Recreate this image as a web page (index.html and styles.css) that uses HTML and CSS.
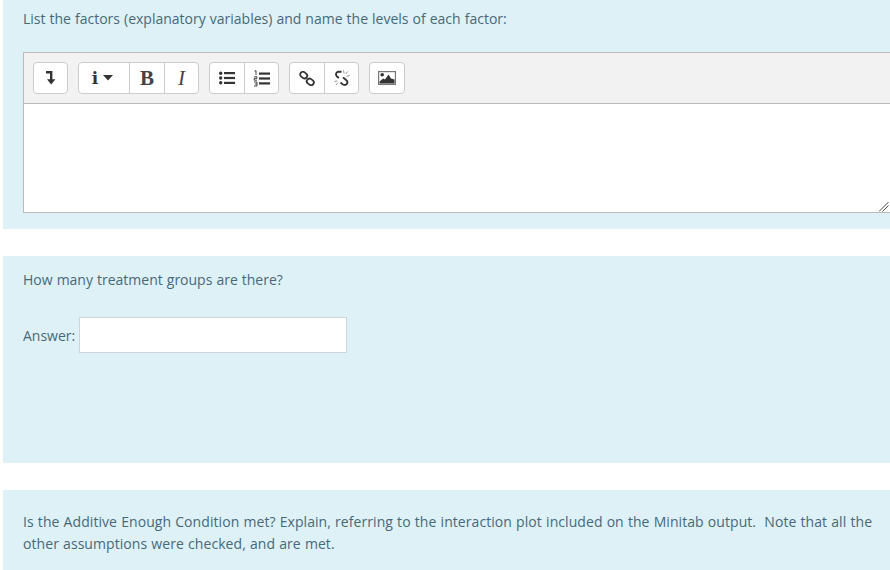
FILE: index.html
```html
<!DOCTYPE html>
<html lang="en">
<head>
    <meta charset="UTF-8">
    <title>Quiz questions</title>
    <link rel="stylesheet" href="styles.css">
</head>
<body>
  <div class="question first">
    <p class="qtext">List the factors (explanatory variables) and name the levels of each factor:</p>
    <div class="editor">
      <div class="toolbar">
        <div class="group">
          <button class="tool single">
            <svg width="10" height="14" viewBox="0 0 10 14"><path d="M0 1.2H5.2V9" fill="none" stroke="#333" stroke-width="2.4"/><path d="M1 8.2h8.4L5.2 13.6z" fill="#333"/></svg>
          </button>
        </div>
        <div class="group">
          <button class="tool wide">
            <span class="glyph-i">i</span>
            <svg width="10" height="6" viewBox="0 0 10 6"><path d="M0 0h10L5 5.5z" fill="#333"/></svg>
          </button>
          <button class="tool narrow"><span class="glyph-b">B</span></button>
          <button class="tool"><span class="glyph-em">I</span></button>
        </div>
        <div class="group">
          <button class="tool">
            <svg width="16" height="14" viewBox="0 0 16 14"><g fill="#333"><circle cx="1.7" cy="2.2" r="1.7"/><circle cx="1.7" cy="7" r="1.7"/><circle cx="1.7" cy="11.8" r="1.7"/><rect x="5" y="1" width="11" height="2.2"/><rect x="5" y="5.9" width="11" height="2.2"/><rect x="5" y="10.8" width="11" height="2.2"/></g></svg>
          </button>
          <button class="tool">
            <svg width="17" height="17" viewBox="0 0 17 17"><g fill="#333"><rect x="6" y="2.5" width="11" height="2.2"/><rect x="6" y="7.4" width="11" height="2.2"/><rect x="6" y="12.3" width="11" height="2.2"/></g><g fill="none" stroke="#333" stroke-width="0.9"><path d="M1.5 1.2L3 .6V5"/><path d="M1 6.8h3v1.6H1.2v1.8H4"/><path d="M1 12h3v4H1M1.8 14H4"/></g></svg>
          </button>
        </div>
        <div class="group">
          <button class="tool">
            <svg width="16" height="15" viewBox="0 0 16 15"><g fill="none" stroke="#333" stroke-width="1.8"><rect x="1" y="1.4" width="7.4" height="5.4" rx="2.7" transform="rotate(38 4.7 4.1)"/><rect x="7.6" y="8.2" width="7.4" height="5.4" rx="2.7" transform="rotate(38 11.3 10.9)"/></g></svg>
          </button>
          <button class="tool">
            <svg width="16" height="16" viewBox="0 0 16 16"><g fill="none" stroke="#333" stroke-width="1.9"><path d="M7.5 1.8H4.4a2.6 2.6 0 0 0-1.6 4.5l2 1.6"/><path d="M9 7.4l3.4 2.9a2.6 2.6 0 0 1-2 4.6 3 3 0 0 1-2-.8L6.6 12.6"/></g><g stroke="#888" stroke-width="0.9"><path d="M9.5 .5l.6 3M13.8 1.4l-2 2.4M15.6 5.5l-3.2.8M.4 11.5l3-.6M2 15l2-2.4"/></g></svg>
          </button>
        </div>
        <div class="group">
          <button class="tool">
            <svg width="18" height="14" viewBox="0 0 18 14"><rect x=".6" y=".6" width="16.8" height="12.8" fill="#fff" stroke="#777" stroke-width="1.2"/><path d="M1.5 12.5h15V8.5L13 7.5 10.5 3.5 7 8.5 5.2 7.5 1.5 10.5z" fill="#333"/><circle cx="4.2" cy="3.8" r="1.8" fill="#333"/></svg>
          </button>
        </div>
      </div>
      <div class="editarea">
        <svg class="grip" width="10" height="10" viewBox="0 0 10 10"><path d="M0 9.5L9.5 0M3.5 9.5L9.5 3.5" stroke="#444" stroke-width="1" fill="none"/></svg>
      </div>
    </div>
  </div>

  <div class="question second">
    <p class="qtext">How many treatment groups are there?</p>
    <div class="answer">
      <label for="answer">Answer:</label>
      <input type="text" id="answer">
    </div>
  </div>

  <div class="question third">
    <p class="qtext">Is the Additive Enough Condition met? Explain, referring to the interaction plot included on the Minitab output.&nbsp; Note that all the other assumptions were checked, and are met.</p>
  </div>
</body>
</html>
```

FILE: styles.css
```css
html, body {
    height: 570px;
    overflow: hidden;
}
body {
    font-family: "Open Sans", Arial, sans-serif;
    font-size: 14px;
    line-height: 22px;
    word-spacing: 0.4px;
    color: #46697a;
    background-color: white;
    margin: 0;
    padding: 0 0 0 3px;
}
.question {
    background-color: #def1f7;
    padding: 0 0 0 20px;
    margin-bottom: 27px;
}
.first {
    height: 229px;
    padding-top: 8px;
    box-sizing: border-box;
    width: 900px;
}
.second {
    height: 207px;
    padding-top: 13px;
    box-sizing: border-box;
    width: 900px;
}
.third {
    height: 80px;
    padding-top: 21px;
    padding-right: 10px;
    box-sizing: border-box;
    width: 887px;
    letter-spacing: 0.07px;
}
.qtext {
    margin: 0;
}
.editor {
    margin-top: 22px;
    width: 900px;
    border: 1px solid #bbb;
    border-right: none;
    background: white;
}
.toolbar {
    display: flex;
    gap: 10px;
    height: 51px;
    box-sizing: border-box;
    padding: 9px 0 0 9px;
    background-color: #f2f2f2;
    border-bottom: 1px solid #bbb;
}
.group {
    display: flex;
    height: 32px;
    border: 1px solid #ccc;
    border-radius: 4px;
    background: white;
    box-sizing: border-box;
}
.tool {
    display: flex;
    align-items: center;
    justify-content: center;
    gap: 5px;
    width: 34px;
    height: 30px;
    padding: 0;
    border: none;
    border-left: 1px solid #ccc;
    background: none;
}
.tool:first-child {
    border-left: none;
}
.single {
    width: 33px;
}
.wide {
    width: 50px;
}
.narrow {
    width: 35px;
}
.glyph-i {
    font-family: "DejaVu Serif", serif;
    font-weight: bold;
    font-size: 17px;
    color: #333;
    margin-left: -3px;
}
.glyph-b, .glyph-em {
    font-family: "Liberation Serif", serif;
    font-size: 21px;
    color: #444;
}
.glyph-b {
    font-weight: bold;
}
.glyph-em {
    font-style: italic;
}
.editarea {
    position: relative;
    height: 108px;
}
.grip {
    position: absolute;
    right: 35px;
    bottom: 0;
}
.answer {
    display: flex;
    align-items: center;
    gap: 4px;
    margin-top: 26px;
}
label {
    padding-top: 1px;
}
input {
    width: 268px;
    height: 36px;
    box-sizing: border-box;
    border: 1px solid #ced4da;
    background: white;
    padding: 0 8px;
}
```
